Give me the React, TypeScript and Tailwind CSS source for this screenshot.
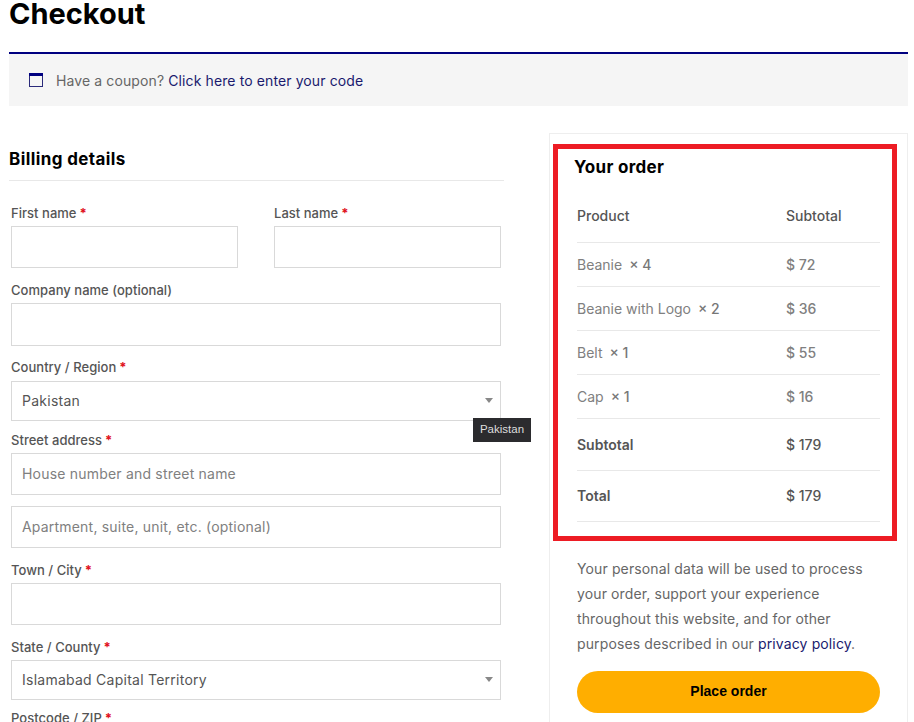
const sans = "font-['Inter','Liberation_Sans',sans-serif]";

function Label({ text, required }: { text: string; required?: boolean }) {
  return (
    <label className="block h-[13px] pl-[2px] text-[13px] leading-[13px] font-medium tracking-[0.03px] text-[#555]">
      {text}
      {required && <span className="ml-[3px] font-bold text-[#e01020]">*</span>}
    </label>
  );
}

function Field({ h = "h-[42px]", mt = "mt-[6px]", placeholder }: { h?: string; mt?: string; placeholder?: string }) {
  return (
    <div className={`ml-[2px] flex items-center border border-[#d9d9d9] bg-white pb-[1px] pl-[10px] text-[14px] tracking-[0.2px] text-[#808080] ${h} ${mt}`}>
      {placeholder}
    </div>
  );
}

function SelectField({ value, mt = "mt-[7px]" }: { value: string; mt?: string }) {
  return (
    <div className={`ml-[2px] flex h-[40px] items-center justify-between border border-[#d9d9d9] bg-white pb-[1px] pl-[10px] pr-[7px] text-[14px] tracking-[0.25px] text-[#555] ${mt}`}>
      <span>{value}</span>
      <span className="h-0 w-0 border-x-[4px] border-t-[5px] border-x-transparent border-t-[#888]" />
    </div>
  );
}

const items = [
  { name: "Beanie", qty: "× 4", price: "$ 72" },
  { name: "Beanie with Logo", qty: "× 2", price: "$ 36" },
  { name: "Belt", qty: "× 1", price: "$ 55" },
  { name: "Cap", qty: "× 1", price: "$ 16" },
];

export default function App() {
  return (
    <div className={`relative h-[722px] w-[914px] overflow-hidden bg-white ${sans}`}>
      <div className="mx-[9px] w-[899px]">
        <h1 className="h-[52px] text-[29px] leading-[28px] font-bold text-black">Checkout</h1>

        {/* Coupon notice */}
        <div className="flex h-[54px] items-center border-t-2 border-[#000080] bg-[#f5f5f5] pl-[20px] text-[14px] tracking-[0.11px] text-[#666]">
          <svg width="14" height="14" viewBox="0 0 14 14" className="mr-[13px]">
            <rect x="0.5" y="0.5" width="13" height="13" fill="none" stroke="#2a2a7a" />
            <rect x="0" y="0" width="14" height="3" fill="#000080" />
          </svg>
          <span>
            Have a coupon? <a className="text-[#1a1a6e]">Click here to enter your code</a>
          </span>
        </div>

        <div className="mt-[27px] flex">
          {/* Billing form */}
          <div className="w-[495px]">
            <h3 className="flex h-[47.5px] items-end border-b border-[#e8e8e8] pb-[11px] text-[17px] leading-[20px] font-bold tracking-[0.4px] text-black">
              Billing details
            </h3>
            <div className="mt-[26px] w-[492px]">
              <div className="flex gap-[34px]">
                <div className="w-[229px]">
                  <Label text="First name" required />
                  <Field />
                </div>
                <div className="w-[229px]">
                  <Label text="Last name" required />
                  <Field />
                </div>
              </div>
              <div className="mt-[16px]">
                <Label text="Company name (optional)" />
                <Field h="h-[43px]" />
              </div>
              <div className="mt-[15px]">
                <Label text="Country / Region" required />
                <SelectField value="Pakistan" />
              </div>
              <div className="mt-[13px]">
                <Label text="Street address" required />
                <Field placeholder="House number and street name" />
                <Field placeholder="Apartment, suite, unit, etc. (optional)" mt="mt-[11px]" />
              </div>
              <div className="mt-[16px]">
                <Label text="Town / City" required />
                <Field />
              </div>
              <div className="mt-[16px]">
                <Label text="State / County" required />
                <SelectField value="Islamabad Capital Territory" mt="mt-[6px]" />
              </div>
              <div className="mt-[12px]">
                <Label text="Postcode / ZIP" required />
              </div>
            </div>
          </div>

          {/* Order panel */}
          <div className="ml-[45px] h-[620px] w-[359px] border border-[#eeeeee] px-[27px]">
            <h3 className="mt-[22px] -ml-[3px] text-[17px] leading-[22px] font-bold tracking-[0.3px] text-black">Your order</h3>
            <div className="mt-[10px] text-[14px]">
              <div className="flex h-[55px] items-center border-b border-[#e8e8e8] font-medium text-[#555]">
                <span className="w-[209px]">Product</span>
                <span>Subtotal</span>
              </div>
              {items.map((item) => (
                <div key={item.name} className="flex h-[44px] items-center border-b border-[#e8e8e8] pb-[1px] text-[#808080]">
                  <span className="w-[209px]">
                    {item.name}
                    <span className="ml-[7px] font-medium text-[#777]">{item.qty}</span>
                  </span>
                  <span className="font-medium">{item.price}</span>
                </div>
              ))}
              <div className="flex h-[52px] items-center border-b border-[#e8e8e8] pb-[1px] font-semibold text-[#555]">
                <span className="w-[209px]">Subtotal</span>
                <span className="font-medium">$ 179</span>
              </div>
              <div className="flex h-[51px] items-center border-b border-[#e8e8e8] pb-[2px] font-semibold text-[#555]">
                <span className="w-[209px]">Total</span>
                <span className="font-medium">$ 179</span>
              </div>
            </div>
            <p className="mt-[34px] text-[14px] leading-[25px] tracking-[0.12px] text-[#666]">
              Your personal data will be used to process your order, support your experience throughout this website, and for other purposes described in our{" "}
              <a className="text-[#1a1a6e]">privacy policy</a>.
            </p>
            <button className="mt-[15px] flex h-[42px] w-full items-center justify-center rounded-full bg-[#ffae00] pb-[2px] font-['Liberation_Sans',sans-serif] text-[14px] font-bold text-black">
              Place order
            </button>
          </div>
        </div>
      </div>

      {/* Tooltip over the country select */}
      <div className="absolute left-[473px] top-[418px] flex h-[24px] w-[58px] items-center justify-center bg-[#2b2b2e] font-['Liberation_Sans',sans-serif] text-[11.5px] text-[#ddd]">
        Pakistan
      </div>

      {/* Red annotation box */}
      <div className="pointer-events-none absolute left-[553px] top-[144px] h-[397px] w-[344px] border-[5px] border-[#ed1c24]" />
    </div>
  );
}
